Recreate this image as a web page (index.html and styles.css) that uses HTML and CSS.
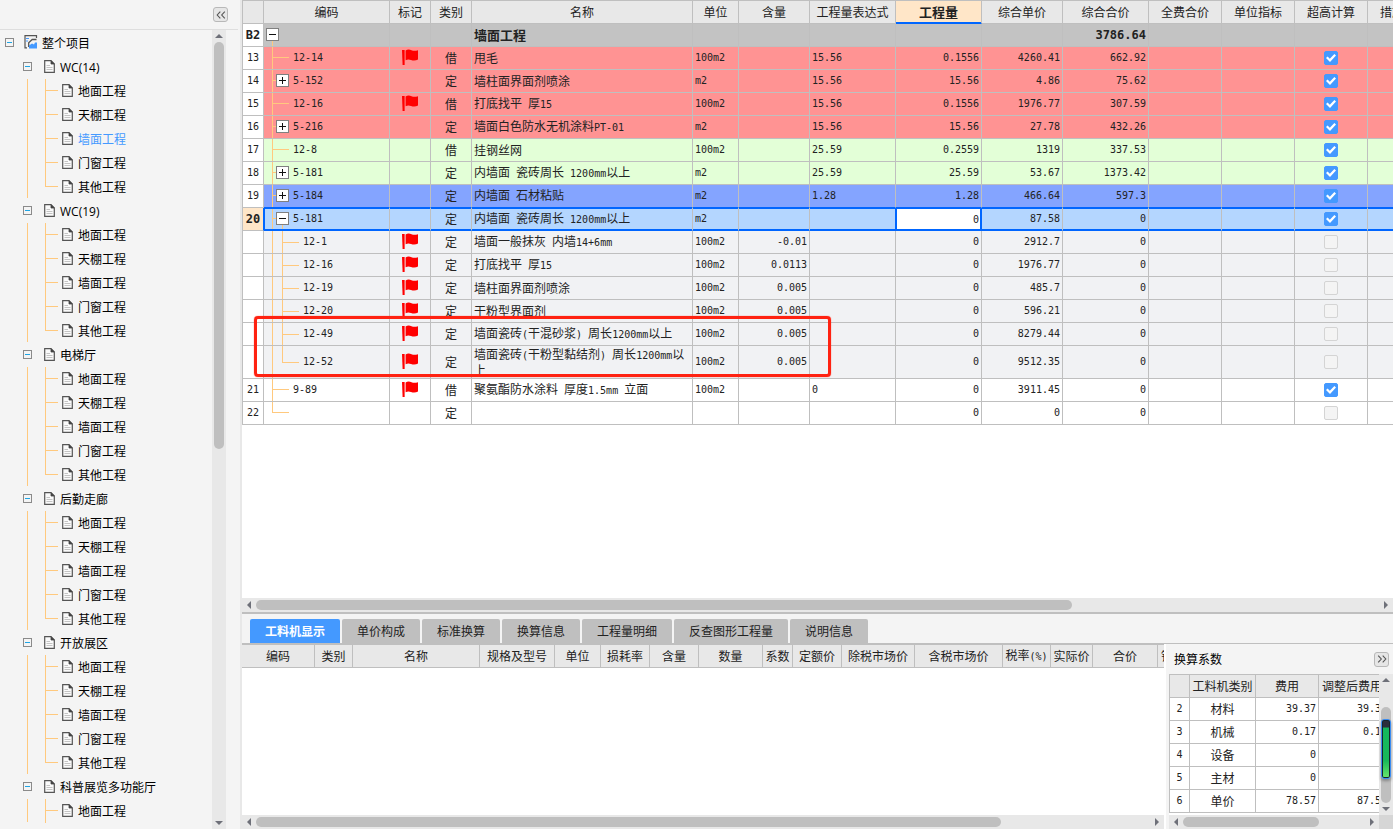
FILE: index.html
```html
<!DOCTYPE html>
<html lang="zh-CN">
<head>
<meta charset="utf-8">
<title>工程计价</title>
<link rel="stylesheet" href="styles.css">
</head>
<body>
<svg class="defs" aria-hidden="true">
  <symbol id="doc" viewBox="0 0 11 13"><path d="M.7 .7H7L10.3 4V12.3H.7Z" fill="#fafafa" stroke="#555" stroke-width="1.2"/><path d="M7 .7V4H10.3Z" fill="#444" stroke="#444" stroke-width=".8"/><path d="M2.5 5.5H6M2.5 7.5H8.5M2.5 9.5H8.5" stroke="#c4c4c4" stroke-width="1"/></symbol>
  <symbol id="project" viewBox="0 0 14 14"><path d="M12.5 3V.7H1V12.8H3" fill="none" stroke="#555" stroke-width="1.2"/><path d="M2 3.5H5M2 6H4" stroke="#4499ff" stroke-width="1.2"/><path d="M12.5 4.5H8.2L4.7 7.8V12" fill="none" stroke="#555" stroke-width="1.3"/><path d="M5 13.5V10.5L8 8.5L10 9.5L11 7.5H13V13.5Z" fill="#4499ff"/></symbol>
  <symbol id="flag" viewBox="0 0 16 16"><path d="M0 1H2.6V16H.6Z" fill="#f00"/><path d="M3.6 1.6C5.5 .2 7.5 .4 9.5 1.2C11.8 2.1 13.5 1.8 16 1.2V10.5C14 11.7 11.500 11.800 9 11C6.900 10.200 5.300 10.300 3.600 11.300Z" fill="#f00"/></symbol>
  <symbol id="dbl" viewBox="0 0 10 8"><path d="M4.300 .6L1.200 4L4.300 7.400M8.800 .6L5.700 4L8.800 7.400" fill="none" stroke="#555" stroke-width="1.100"/></symbol>
</svg>
<div class="app">
  <aside class="sidebar">
    <div class="side-head"><button class="fold" aria-label="收起"><svg><use href="#dbl"/></svg></button></div>
    <div class="side-body">
      <nav class="tree">
        <div class="node root"><button class="tg" aria-label="折叠"></button><svg class="pi"><use href="#project"/></svg><a href="#">整个项目</a></div>
        <ul>
          <li><div class="node"><button class="tg" aria-label="折叠"></button><svg><use href="#doc"/></svg><a href="#">WC(14)</a></div>
            <ul class="leaves">
              <li><svg><use href="#doc"/></svg><a href="#">地面工程</a></li>
              <li><svg><use href="#doc"/></svg><a href="#">天棚工程</a></li>
              <li><svg><use href="#doc"/></svg><a href="#" class="on">墙面工程</a></li>
              <li><svg><use href="#doc"/></svg><a href="#">门窗工程</a></li>
              <li><svg><use href="#doc"/></svg><a href="#">其他工程</a></li>
            </ul></li>
          <li><div class="node"><button class="tg" aria-label="折叠"></button><svg><use href="#doc"/></svg><a href="#">WC(19)</a></div>
            <ul class="leaves">
              <li><svg><use href="#doc"/></svg><a href="#">地面工程</a></li>
              <li><svg><use href="#doc"/></svg><a href="#">天棚工程</a></li>
              <li><svg><use href="#doc"/></svg><a href="#">墙面工程</a></li>
              <li><svg><use href="#doc"/></svg><a href="#">门窗工程</a></li>
              <li><svg><use href="#doc"/></svg><a href="#">其他工程</a></li>
            </ul></li>
          <li><div class="node"><button class="tg" aria-label="折叠"></button><svg><use href="#doc"/></svg><a href="#">电梯厅</a></div>
            <ul class="leaves">
              <li><svg><use href="#doc"/></svg><a href="#">地面工程</a></li>
              <li><svg><use href="#doc"/></svg><a href="#">天棚工程</a></li>
              <li><svg><use href="#doc"/></svg><a href="#">墙面工程</a></li>
              <li><svg><use href="#doc"/></svg><a href="#">门窗工程</a></li>
              <li><svg><use href="#doc"/></svg><a href="#">其他工程</a></li>
            </ul></li>
          <li><div class="node"><button class="tg" aria-label="折叠"></button><svg><use href="#doc"/></svg><a href="#">后勤走廊</a></div>
            <ul class="leaves">
              <li><svg><use href="#doc"/></svg><a href="#">地面工程</a></li>
              <li><svg><use href="#doc"/></svg><a href="#">天棚工程</a></li>
              <li><svg><use href="#doc"/></svg><a href="#">墙面工程</a></li>
              <li><svg><use href="#doc"/></svg><a href="#">门窗工程</a></li>
              <li><svg><use href="#doc"/></svg><a href="#">其他工程</a></li>
            </ul></li>
          <li><div class="node"><button class="tg" aria-label="折叠"></button><svg><use href="#doc"/></svg><a href="#">开放展区</a></div>
            <ul class="leaves">
              <li><svg><use href="#doc"/></svg><a href="#">地面工程</a></li>
              <li><svg><use href="#doc"/></svg><a href="#">天棚工程</a></li>
              <li><svg><use href="#doc"/></svg><a href="#">墙面工程</a></li>
              <li><svg><use href="#doc"/></svg><a href="#">门窗工程</a></li>
              <li><svg><use href="#doc"/></svg><a href="#">其他工程</a></li>
            </ul></li>
          <li><div class="node"><button class="tg" aria-label="折叠"></button><svg><use href="#doc"/></svg><a href="#">科普展览多功能厅</a></div>
            <ul class="leaves more">
              <li><svg><use href="#doc"/></svg><a href="#">地面工程</a></li>
            </ul></li>
        </ul>
      </nav>
      <div class="vbar"><button class="up" aria-label="向上"></button><div class="track"><div class="thumb" style="height:52.5%"></div></div><button class="down" aria-label="向下"></button></div>
    </div>
  </aside>

  <main class="main">
    <div class="sheet">
      <table class="grid">
        <colgroup><col class="w21"><col class="w126"><col class="w41"><col class="w41"><col class="w221"><col class="w46"><col class="w71"><col class="w86"><col class="w86"><col class="w81"><col class="w86"><col class="w73"><col class="w73"><col class="w73"><col class="w73"></colgroup>
        <thead><tr><th></th><th>编码</th><th>标记</th><th>类别</th><th>名称</th><th>单位</th><th>含量</th><th>工程量表达式</th><th class="cur">工程量</th><th>综合单价</th><th>综合合价</th><th>全费合价</th><th>单位指标</th><th>超高计算</th><th>措施类别</th></tr></thead>
        <tbody>
          <tr class="sum"><th>B2</th><td class="code top"><div><button class="box minus" aria-label="折叠"></button></div></td><td></td><td></td><td>墙面工程</td><td></td><td></td><td></td><td></td><td></td><td class="r m">3786.64</td><td></td><td></td><td></td><td></td></tr>
          <tr class="red"><th>13</th><td class="code l1 m">12-14</td><td class="c"><svg class="flag"><use href="#flag"/></svg></td><td class="c">借</td><td>甩毛</td><td class="m">100m2</td><td></td><td class="m">15.56</td><td class="r m">0.1556</td><td class="r m">4260.41</td><td class="r m">662.92</td><td></td><td></td><td class="c"><input type="checkbox" aria-label="超高计算" checked></td><td></td></tr>
          <tr class="red"><th>14</th><td class="code b1 m"><div><button class="box plus" aria-label="展开"></button>5-152</div></td><td></td><td class="c">定</td><td>墙柱面界面剂喷涂</td><td class="m">m2</td><td></td><td class="m">15.56</td><td class="r m">15.56</td><td class="r m">4.86</td><td class="r m">75.62</td><td></td><td></td><td class="c"><input type="checkbox" aria-label="超高计算" checked></td><td></td></tr>
          <tr class="red"><th>15</th><td class="code l1 m">12-16</td><td class="c"><svg class="flag"><use href="#flag"/></svg></td><td class="c">借</td><td>打底找平<span class="m"> </span>厚<span class="m">15</span></td><td class="m">100m2</td><td></td><td class="m">15.56</td><td class="r m">0.1556</td><td class="r m">1976.77</td><td class="r m">307.59</td><td></td><td></td><td class="c"><input type="checkbox" aria-label="超高计算" checked></td><td></td></tr>
          <tr class="red"><th>16</th><td class="code b1 m"><div><button class="box plus" aria-label="展开"></button>5-216</div></td><td></td><td class="c">定</td><td>墙面白色防水无机涂料<span class="m">PT-01</span></td><td class="m">m2</td><td></td><td class="m">15.56</td><td class="r m">15.56</td><td class="r m">27.78</td><td class="r m">432.26</td><td></td><td></td><td class="c"><input type="checkbox" aria-label="超高计算" checked></td><td></td></tr>
          <tr class="green"><th>17</th><td class="code l1 m">12-8</td><td></td><td class="c">借</td><td>挂钢丝网</td><td class="m">100m2</td><td></td><td class="m">25.59</td><td class="r m">0.2559</td><td class="r m">1319</td><td class="r m">337.53</td><td></td><td></td><td class="c"><input type="checkbox" aria-label="超高计算" checked></td><td></td></tr>
          <tr class="green"><th>18</th><td class="code b1 m"><div><button class="box plus" aria-label="展开"></button>5-181</div></td><td></td><td class="c">定</td><td>内墙面<span class="m"> </span>瓷砖周长<span class="m"> 1200mm</span>以上</td><td class="m">m2</td><td></td><td class="m">25.59</td><td class="r m">25.59</td><td class="r m">53.67</td><td class="r m">1373.42</td><td></td><td></td><td class="c"><input type="checkbox" aria-label="超高计算" checked></td><td></td></tr>
          <tr class="blue"><th>19</th><td class="code b1 m"><div><button class="box plus" aria-label="展开"></button>5-184</div></td><td></td><td class="c">定</td><td>内墙面<span class="m"> </span>石材粘贴</td><td class="m">m2</td><td></td><td class="m">1.28</td><td class="r m">1.28</td><td class="r m">466.64</td><td class="r m">597.3</td><td></td><td></td><td class="c"><input type="checkbox" aria-label="超高计算" checked></td><td></td></tr>
          <tr class="sel"><th>20</th><td class="code b1 open m"><div><button class="box minus" aria-label="折叠"></button>5-181</div></td><td></td><td class="c">定</td><td>内墙面<span class="m"> </span>瓷砖周长<span class="m"> 1200mm</span>以上</td><td class="m">m2</td><td></td><td class="before"></td><td class="r m edit"><input type="text" aria-label="工程量" value="0"></td><td class="r m">87.58</td><td class="r m">0</td><td></td><td></td><td class="c"><input type="checkbox" aria-label="超高计算" checked></td><td></td></tr>
          <tr class="sub"><th></th><td class="code l2 m">12-1</td><td class="c"><svg class="flag"><use href="#flag"/></svg></td><td class="c">定</td><td>墙面一般抹灰<span class="m"> </span>内墙<span class="m">14+6mm</span></td><td class="m">100m2</td><td class="r m">-0.01</td><td></td><td class="r m">0</td><td class="r m">2912.7</td><td class="r m">0</td><td></td><td></td><td class="c"><input type="checkbox" aria-label="超高计算" disabled></td><td></td></tr>
          <tr class="sub"><th></th><td class="code l2 m">12-16</td><td class="c"><svg class="flag"><use href="#flag"/></svg></td><td class="c">定</td><td>打底找平<span class="m"> </span>厚<span class="m">15</span></td><td class="m">100m2</td><td class="r m">0.0113</td><td></td><td class="r m">0</td><td class="r m">1976.77</td><td class="r m">0</td><td></td><td></td><td class="c"><input type="checkbox" aria-label="超高计算" disabled></td><td></td></tr>
          <tr class="sub"><th></th><td class="code l2 m">12-19</td><td class="c"><svg class="flag"><use href="#flag"/></svg></td><td class="c">定</td><td>墙柱面界面剂喷涂</td><td class="m">100m2</td><td class="r m">0.005</td><td></td><td class="r m">0</td><td class="r m">485.7</td><td class="r m">0</td><td></td><td></td><td class="c"><input type="checkbox" aria-label="超高计算" disabled></td><td></td></tr>
          <tr class="sub"><th></th><td class="code l2 m">12-20</td><td class="c"><svg class="flag"><use href="#flag"/></svg></td><td class="c">定</td><td>干粉型界面剂</td><td class="m">100m2</td><td class="r m">0.005</td><td></td><td class="r m">0</td><td class="r m">596.21</td><td class="r m">0</td><td></td><td></td><td class="c"><input type="checkbox" aria-label="超高计算" disabled></td><td></td></tr>
          <tr class="sub"><th></th><td class="code l2 m">12-49</td><td class="c"><svg class="flag"><use href="#flag"/></svg></td><td class="c">定</td><td>墙面瓷砖<span class="m">(</span>干混砂浆<span class="m">) </span>周长<span class="m">1200mm</span>以上</td><td class="m">100m2</td><td class="r m">0.005</td><td></td><td class="r m">0</td><td class="r m">8279.44</td><td class="r m">0</td><td></td><td></td><td class="c"><input type="checkbox" aria-label="超高计算" disabled></td><td></td></tr>
          <tr class="sub tall"><th></th><td class="code l2 end m">12-52</td><td class="c"><svg class="flag"><use href="#flag"/></svg></td><td class="c">定</td><td class="wrap">墙面瓷砖<span class="m">(</span>干粉型黏结剂<span class="m">) </span>周长<span class="m">1200mm</span>以上</td><td class="m">100m2</td><td class="r m">0.005</td><td></td><td class="r m">0</td><td class="r m">9512.35</td><td class="r m">0</td><td></td><td></td><td class="c"><input type="checkbox" aria-label="超高计算" disabled></td><td></td></tr>
          <tr><th>21</th><td class="code l1 m">9-89</td><td class="c"><svg class="flag"><use href="#flag"/></svg></td><td class="c">借</td><td>聚氨酯防水涂料<span class="m"> </span>厚度<span class="m">1.5mm </span>立面</td><td class="m">100m2</td><td></td><td class="m">0</td><td class="r m">0</td><td class="r m">3911.45</td><td class="r m">0</td><td></td><td></td><td class="c"><input type="checkbox" aria-label="超高计算" checked></td><td></td></tr>
          <tr><th>22</th><td class="code l1 end m"></td><td></td><td class="c">定</td><td></td><td></td><td></td><td></td><td class="r m">0</td><td class="r m">0</td><td class="r m">0</td><td></td><td></td><td class="c"><input type="checkbox" aria-label="超高计算" disabled></td><td></td></tr>
        </tbody>
      </table>
      <div class="mark"></div>
    </div>
    <div class="hbar"><button class="left" aria-label="向左"></button><div class="track"><div class="thumb" style="width:72.7%"></div></div><button class="right" aria-label="向右"></button></div>
    <div class="tabs" role="tablist">
      <button role="tab" class="active" aria-selected="true">工料机显示</button><button role="tab">单价构成</button><button role="tab">标准换算</button><button role="tab">换算信息</button><button role="tab">工程量明细</button><button role="tab">反查图形工程量</button><button role="tab">说明信息</button>
    </div>
    <div class="lower">
      <section class="detail">
        <div class="pane">
          <table class="grid list">
            <colgroup><col class="w73"><col class="w38"><col class="w127"><col class="w75"><col class="w46"><col class="w49"><col class="w49"><col class="w64"><col class="w30"><col class="w49"><col class="w73"><col class="w88"><col class="w48"><col class="w42"><col class="w65"><col class="w73"></colgroup>
            <thead><tr><th>编码</th><th>类别</th><th>名称</th><th>规格及型号</th><th>单位</th><th>损耗率</th><th>含量</th><th>数量</th><th>系数</th><th>定额价</th><th>除税市场价</th><th>含税市场价</th><th>税率<span class="m">(%)</span></th><th>实际价</th><th>合价</th><th class="start">锁定数量</th></tr></thead>
          </table>
        </div>
        <div class="hbar"><button class="left" aria-label="向左"></button><div class="track"><div class="thumb" style="width:83.3%"></div></div><button class="right" aria-label="向右"></button></div>
      </section>
      <section class="factor">
        <div class="factor-head"><h2>换算系数</h2><button class="fold flip" aria-label="展开"><svg><use href="#dbl"/></svg></button></div>
        <div class="factor-body">
          <div class="pane">
            <table class="grid coef">
              <colgroup><col class="w20"><col class="w66"><col class="w63"><col class="w71"></colgroup>
              <thead><tr><th></th><th>工料机类别</th><th>费用</th><th class="start">调整后费用</th></tr></thead>
              <tbody>
                <tr><th>2</th><td class="c">材料</td><td class="r m">39.37</td><td class="r m">39.37</td></tr>
                <tr><th>3</th><td class="c">机械</td><td class="r m">0.17</td><td class="r m">0.17</td></tr>
                <tr><th>4</th><td class="c">设备</td><td class="r m">0</td><td></td></tr>
                <tr><th>5</th><td class="c">主材</td><td class="r m">0</td><td></td></tr>
                <tr><th>6</th><td class="c">单价</td><td class="r m">78.57</td><td class="r m">87.57</td></tr>
              </tbody>
            </table>
          </div>
          <div class="vbar"><button class="up" aria-label="向上"></button><div class="track"><div class="thumb" style="height:82%;margin-top:21px"></div></div><button class="down" aria-label="向下"></button><div class="gauge"></div></div>
          <div class="hbar"><button class="left" aria-label="向左"></button><div class="track"><div class="thumb" style="width:74.7%"></div></div><button class="right" aria-label="向右"></button></div>
          <div class="corner"></div>
        </div>
      </section>
    </div>
  </main>
</div>
</body>
</html>
```
FILE: styles.css
```css
:root {
  --line: #bfbfbf;
  --head: #e8e8e8;
  --guide: #ffc97e;
  --accent: #4499ff;
  --focus: #0066ff;
  --panel: #f4f4f4;
}
* { box-sizing: border-box; }
body { margin: 0; font: 12px/16px "Noto Sans CJK SC", sans-serif; color: #222; background: #fff; }
button { padding: 0; border: 0; background: none; font: inherit; color: inherit; }
ul { list-style: none; margin: 0; padding: 0; }
a { color: inherit; text-decoration: none; }
.defs { position: absolute; width: 0; height: 0; }
.app { display: flex; height: 100vh; overflow: hidden; }

/* sidebar */
.sidebar { flex: 0 0 242px; display: flex; flex-direction: column; background: var(--panel); border-right: 2px solid var(--head); }
.side-head { height: 30px; display: flex; justify-content: flex-end; align-items: center; padding-right: 10px; margin-right: 2px; border-bottom: 1px solid #dedede; }
.fold { width: 15px; height: 15px; display: flex; align-items: center; justify-content: center; background: #e6e6e6; border: 1px solid #b8b8b8; border-radius: 3px; }
.fold svg { width: 10px; height: 8px; }
.flip svg { transform: scaleX(-1); }
.side-body { flex: 1; min-height: 0; display: flex; padding-right: 14px; }
.tree { flex: 1; overflow: hidden; padding-top: 1px; font-family: "Open Sans", "Noto Sans CJK SC", sans-serif; color: #000; }
.tree a { padding-top: 2px; }
.node, .leaves li { display: flex; align-items: center; height: 24px; white-space: nowrap; }
.node { padding-left: 23px; }
.node svg, .leaves svg { width: 11px; height: 13px; margin: 0 5px 2px 0; }
.node .tg { margin: 0 12px 2px 0; }
.root { padding-left: 5px; }
.root .tg { margin-right: 10px; }
.root .pi { width: 14px; height: 14px; margin-right: 4px; }
.tg { width: 9px; height: 9px; border: 1px solid #8a8a8a; background: linear-gradient(#1ea4e4, #1ea4e4) 1px 3px / 5px 1px no-repeat; }
.leaves { background: linear-gradient(var(--guide), var(--guide)) 27px 0 / 1px calc(100% - 1px) no-repeat; }
.leaves li { padding-left: 62px; background: linear-gradient(var(--guide), var(--guide)) 45px 0 / 1px 100% no-repeat, linear-gradient(var(--guide), var(--guide)) 45px 11px / 13px 1px no-repeat; }
.leaves:not(.more) li:last-child { background-size: 1px 12px, 13px 1px; }
.on { color: var(--accent); }

/* scroll bars */
.hbar, .vbar { display: flex; background: var(--head); position: relative; }
.hbar { height: 14px; flex: none; }
.vbar { width: 14px; flex-direction: column; align-items: center; }
.track { flex: 1; min-height: 0; }
.hbar .track { padding: 2px 0; }
.vbar .track { width: 10px; }
.thumb { background: #bfbfbf; border-radius: 5px; height: 10px; }
.hbar button { width: 14px; display: grid; place-items: center; }
.vbar button { width: 14px; height: 12px; display: grid; place-items: center; }
.hbar button::before, .vbar button::before { content: ""; background: #6e7079; }
.hbar button::before { width: 4px; height: 8px; }
.vbar button::before { width: 8px; height: 4px; }
.left::before { clip-path: polygon(100% 0, 100% 100%, 0 50%); }
.right::before { clip-path: polygon(0 0, 0 100%, 100% 50%); }
.up::before { clip-path: polygon(0 100%, 100% 100%, 50% 0); }
.down::before { clip-path: polygon(0 0, 100% 0, 50% 100%); }

/* tables */
.main { flex: 1; min-width: 0; display: flex; flex-direction: column; }
.sheet { flex: 1; min-height: 0; overflow: hidden; position: relative; }
.grid { table-layout: fixed; width: 0; border-collapse: separate; border-spacing: 0; border-left: 1px solid var(--line); border-top: 1px solid var(--line); }
.grid th, .grid td { height: 23px; padding: 0 2px; border-right: 1px solid var(--line); border-bottom: 1px solid var(--line); white-space: nowrap; font-weight: normal; line-height: 16px; overflow: hidden; text-align: left; vertical-align: middle; }
.grid thead th { background: var(--head); text-align: center; padding: 0; }
.grid tbody th { background: #fff; text-align: center; padding: 0; font: 10px/16px "DejaVu Sans Mono", monospace; }
.grid .r { text-align: right; }
.grid .c { text-align: center; }
.m { font-family: "DejaVu Sans Mono", monospace; font-size: 10px; white-space: pre; }
.grid thead .cur { background: #ffe6c8; font-weight: bold; font-size: 13px; box-shadow: inset 0 -1px var(--focus); border-bottom-color: var(--focus); }
.grid thead .start { text-align: left; padding-left: 3px; }
.list { border-left: 0; }
.w20 { width: 20px; } .w21 { width: 21px; } .w30 { width: 30px; } .w38 { width: 38px; }
.w41 { width: 41px; } .w42 { width: 42px; } .w46 { width: 46px; } .w48 { width: 48px; }
.w49 { width: 49px; } .w63 { width: 63px; } .w64 { width: 64px; } .w65 { width: 65px; }
.w66 { width: 66px; } .w71 { width: 71px; } .w73 { width: 73px; } .w75 { width: 75px; }
.w81 { width: 81px; } .w86 { width: 86px; } .w88 { width: 88px; }
.w126 { width: 126px; } .w127 { width: 127px; } .w221 { width: 221px; }

.sum td { background-color: #c3c3c3; font-weight: bold; font-size: 13px; }
.sum td.m { font-size: 12px; }
.grid .sum th { font-weight: bold; font-size: 12px; }
.red { background: #ff9393; }
.green { background: #e3ffd7; }
.blue { background: #84a4ff; }
.sub { background: #f1f2f4; }
.sel { background: #b4d6ff; }
.blue td, .sel td { border-bottom-color: var(--focus); }
.sel td { box-shadow: inset 0 1px var(--focus), inset 0 -1px var(--focus); }
.sel td.code { box-shadow: inset 0 1px var(--focus), inset 0 -1px var(--focus), inset 1px 0 var(--focus); }
.grid .sel th { background: #ffe6c8; font-weight: bold; font-size: 12px; border-right-color: var(--focus); }
.grid .sel .before { border-right-color: var(--focus); }
.grid .edit { background: #fff; border-right-color: var(--focus); padding: 0; box-shadow: inset 0 0 0 1px var(--focus); }
.edit input { width: 100%; height: 18px; border: 0; padding: 0 2px; background: none; font: inherit; color: inherit; text-align: right; outline: 0; display: block; }
.grid .tall td { height: 33px; }
.grid .tall .wrap { white-space: normal; line-height: 14px; }

/* outline guides in the code column */
.grid td.code { padding: 0 0 0 29px; background-repeat: no-repeat; }
.code div { display: flex; align-items: center; height: 22px; }
.grid td.top, .grid td.b1 { padding-left: 12px; }
.grid td.top { padding-left: 2px; background-image: linear-gradient(var(--guide), var(--guide)); background-position: 8px 17px; background-size: 1px 5px; }
.grid td.l1, .grid td.b1 { background-image: linear-gradient(var(--guide), var(--guide)), linear-gradient(var(--guide), var(--guide)); background-position: 8px 0, 8px 10px; background-size: 1px 100%, 17px 1px; }
.grid td.b1 { background-size: 1px 100%, 4px 1px; }
.grid td.l1.end { background-size: 1px 11px, 17px 1px; }
.grid td.open { background-image: linear-gradient(var(--guide), var(--guide)), linear-gradient(var(--guide), var(--guide)), linear-gradient(var(--guide), var(--guide)); background-position: 8px 0, 8px 10px, 18px 17px; background-size: 1px 100%, 4px 1px, 1px 5px; }
.grid td.l2 { padding-left: 39px; background-image: linear-gradient(var(--guide), var(--guide)), linear-gradient(var(--guide), var(--guide)), linear-gradient(var(--guide), var(--guide)); background-position: 8px 0, 18px 0, 18px 50%; background-size: 1px 100%, 1px 100%, 17px 1px; }
.grid td.l2.end { background-size: 1px 100%, 1px 50%, 17px 1px; }
.box { width: 13px; height: 13px; margin: 0 4px 1px 0; border: 1px solid #808080; background: #fff linear-gradient(#111, #111) 2px 5px / 7px 1px no-repeat; }
.plus { background: linear-gradient(#111, #111) 2px 5px / 7px 1px no-repeat, linear-gradient(#111, #111) 5px 2px / 1px 7px no-repeat, #fff; }
.flag { width: 16px; height: 16px; display: block; margin: 0 auto 2px; }

input[type="checkbox"] { appearance: none; width: 14px; height: 14px; margin: 0 auto; display: grid; place-items: center; border: 1px solid #d4d4d4; border-radius: 2px; background: #f4f4f4; }
input[type="checkbox"]:checked { background: var(--accent); border-color: var(--accent); }
input[type="checkbox"]:checked::before { content: ""; width: 10px; height: 8px; background: #fff; clip-path: polygon(0 50%, 16% 32%, 38% 58%, 84% 0, 100% 18%, 40% 100%); }

/* highlighted area over the sheet */
.mark { position: absolute; left: 12px; top: 316px; width: 577px; height: 61px; border: 3px solid #ff2211; border-radius: 4px; box-shadow: 0 0 1px #ff2211; pointer-events: none; }

/* tabs */
.tabs { display: flex; gap: 2px; padding: 5px 8px 0; background: var(--panel); border-top: 2px solid var(--line); border-bottom: 1px solid var(--line); }
.tabs button { height: 24px; padding: 0 15px; background: #bfbfbf; border-radius: 2px 2px 0 0; white-space: nowrap; }
.tabs .active { background: var(--accent); color: #fff; font-weight: bold; }

/* lower panels */
.lower { flex: none; display: flex; background: var(--panel); }
.detail { flex: 1; min-width: 0; display: flex; flex-direction: column; }
.detail .pane { flex: 1; background: #fff; overflow: hidden; }
.factor { flex: 0 0 229px; min-width: 0; padding-left: 3px; border-left: 2px solid #fff; }
.factor-head { height: 30px; display: flex; align-items: center; justify-content: space-between; padding: 0 4px 0 5px; }
.factor-head h2 { margin: 0; font-size: 12px; font-weight: normal; color: #000; }
.factor-body { display: grid; grid-template-columns: 1fr 14px; grid-template-rows: auto 14px; }
.factor-body .pane { min-width: 0; overflow: hidden; background: #fff; padding-bottom: 2px; }
.corner { background: #d6d6d6; }
.gauge { position: absolute; left: 2px; top: 45px; width: 10px; height: 60px; border: 1px solid #3b8cf0; border-radius: 3px; background: linear-gradient(#2c2f3c 12%, #14b85c 14%, #19b95a 70%, #6be86c); box-shadow: inset 0 0 0 1px #15252e, 0 2px 3px #888; }
```
